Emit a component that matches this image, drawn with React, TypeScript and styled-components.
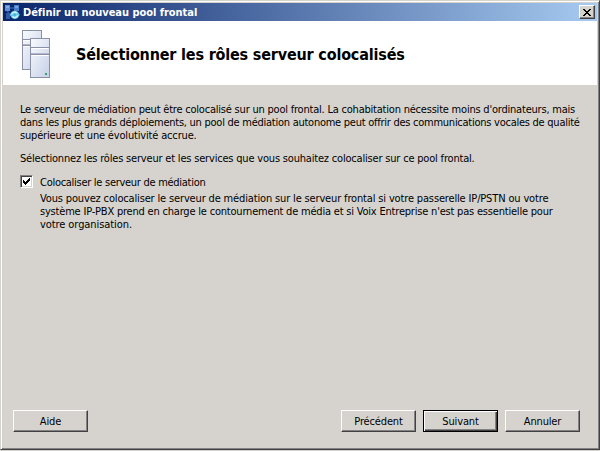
import React from "react";
import styled, { createGlobalStyle } from "styled-components";

const GlobalStyle = createGlobalStyle`
  *, *::before, *::after { box-sizing: border-box; }
  body {
    margin: 0;
    background: #d6d3ce;
    color: #000;
    font: 11px/13px "DejaVu Sans Condensed", Tahoma, "Noto Sans", sans-serif;
  }
  p { margin: 0; }
`;

const Dialog = styled.main`
  display: flex;
  flex-direction: column;
  width: 600px;
  height: 450px;
  padding: 2px 1px 1px;
  background: #d6d3ce;
  border: 1px solid;
  border-color: #d6d3ce #424142 #424142 #d6d3ce;
  box-shadow: inset 1px 1px 0 #fff, inset -1px -1px 0 #848284;
  overflow: hidden;
`;

const TitleBar = styled.header`
  display: flex;
  align-items: center;
  height: 18px;
  margin: 0 1px;
  padding: 0 2px 0 1px;
  flex: none;
  background: linear-gradient(90deg, #0a246a, #a6caf0);
`;

const TitleText = styled.h1`
  flex: 1;
  margin: 0 0 0 3px;
  padding-top: 2px;
  color: #fff;
  font-size: 11px;
  font-weight: 700;
  line-height: 14px;
  letter-spacing: -0.04px;
  white-space: nowrap;
`;

const CloseButton = styled.button`
  display: flex;
  align-items: center;
  justify-content: center;
  width: 16px;
  height: 14px;
  padding: 0;
  background: #d6d3ce;
  border: 1px solid;
  border-color: #fff #424142 #424142 #fff;
  box-shadow: inset -1px -1px 0 #848284;
`;

const Banner = styled.section`
  display: flex;
  height: 64px;
  margin: 0 1px;
  padding: 9px 0 0 18px;
  gap: 24px;
  flex: none;
  background: #fff;
`;

const Heading = styled.h2`
  margin: 15px 0 0;
  font-size: 16px;
  font-weight: 700;
  line-height: 20px;
  letter-spacing: -0.18px;
  white-space: nowrap;
`;

const Content = styled.section`
  flex: 1;
  padding: 18px 0 0 18px;
`;

const Paragraph = styled.p`
  margin-bottom: 10px;
`;

const Line = styled.span<{ $tracking: number }>`
  display: block;
  letter-spacing: ${(p) => p.$tracking}px;
  white-space: nowrap;
`;

const Option = styled.label`
  display: flex;
  align-items: flex-start;
  gap: 7px;
  height: 14px;

  & > ${Line} {
    padding-top: 1px;
  }
`;

const CheckBox = styled.span`
  display: flex;
  align-items: center;
  justify-content: center;
  width: 13px;
  height: 13px;
  background: #fff;
  border: 1px solid;
  border-color: #848284 #fff #fff #848284;
  box-shadow: inset 1px 1px 0 #424142, inset -1px -1px 0 #d6d3ce;
`;

const Description = styled.p`
  padding: 3px 0 0 20px;
`;

const Footer = styled.footer`
  display: flex;
  align-items: flex-start;
  height: 38px;
  padding: 0 18px 0 11px;
  flex: none;
`;

const Button = styled.button<{ $primary?: boolean }>`
  width: 75px;
  height: 22px;
  margin-left: 7px;
  padding: 0;
  font: inherit;
  letter-spacing: -0.15px;
  color: #000;
  background: #d6d3ce;
  border: 1px solid;
  border-color: ${(p) => (p.$primary ? "#000" : "#fff #424142 #424142 #fff")};
  box-shadow: ${(p) =>
    p.$primary
      ? "inset 1px 1px 0 #fff, inset -1px -1px 0 #424142, inset -2px -2px 0 #848284"
      : "inset -1px -1px 0 #848284"};

  &:first-child {
    margin: 0 auto 0 0;
  }
`;

const AppIcon = () => (
  <svg width="16" height="16" viewBox="0 0 16 16">
    <path d="M4 4h8M3 6l3 6M12 5l-4 5" stroke="#3979c6" strokeWidth="1" />
    <rect x="1" y="1" width="5" height="6" fill="#5a8ed6" />
    <rect x="10" y="1" width="5" height="6" fill="#4a7cc8" />
    <rect x="2" y="9" width="4" height="6" fill="#2f5aa5" />
    <path d="M2 3h3M11 3h3" stroke="#a4c8f0" />
    <path d="M5.6 10.8L8 7.4l2.8-1 3 1.4 2 3-2 3.2-3 1.2-3-1.2z" fill="#65c7e8" />
    <path d="M7.6 10.4c.7-2.4 3.6-3 5.3-1.2M13.8 11.2c-.7 2.4-3.6 3-5.3 1.2" fill="none" stroke="#c9f4ff" strokeWidth="1.5" />
    <path d="M9.3 10.8l1.5-1.2 1.5 1.2-1.5 1.2z" fill="#48a9d4" />
  </svg>
);

const ServersIcon = () => (
  <svg width="31" height="50" viewBox="0 0 31 50">
    <defs>
      <linearGradient id="face" x1="0" y1="0" x2="1" y2="1">
        <stop offset="0" stopColor="#f9fbff" />
        <stop offset="1" stopColor="#c5cfe6" />
      </linearGradient>
    </defs>
    <g stroke="#8a91a6" fill="url(#face)">
      <rect x="1.5" y=".5" width="19" height="39" />
      <path d="M1.5 9.5h19M1.5 15.5h19" />
      <rect x="9.5" y="8.5" width="19" height="39" />
      <path d="M9.5 17.5h19M9.5 24.5h19" />
    </g>
    <path d="M2.5 10.5h6M2.5 16.5h6M10.5 18.5h17M10.5 25.5h17" stroke="#fff" />
    <path d="M2 14.5h7M10 23.5h18" stroke="#b8b5cd" />
    <rect x="24" y="43" width="2" height="2" fill="#31a36b" />
  </svg>
);

const CloseIcon = () => (
  <svg width="8" height="7" viewBox="0 0 8 7" shapeRendering="crispEdges">
    <path d="M0 0h2v1h1v1h2v-1h1v-1h2v1h-1v1h-1v1h-1v1h1v1h1v1h1v1h-2v-1h-1v-1h-2v1h-1v1h-2v-1h1v-1h1v-1h1v-1h-1v-1h-1v-1h-1z" />
  </svg>
);

const CheckIcon = () => (
  <svg width="7" height="7" viewBox="0 0 7 7" shapeRendering="crispEdges">
    <path d="M0 2h1v1h1v1h1v-1h1v-1h1v-1h1v-1h1v3h-1v1h-1v1h-1v1h-1v1h-1v-1h-1v-1h-1z" />
  </svg>
);

export default function App() {
  return (
    <>
      <GlobalStyle />
      <Dialog>
        <TitleBar>
          <AppIcon />
          <TitleText>Définir un nouveau pool frontal</TitleText>
          <CloseButton aria-label="Fermer"><CloseIcon /></CloseButton>
        </TitleBar>
        <Banner>
          <ServersIcon />
          <Heading>Sélectionner les rôles serveur colocalisés</Heading>
        </Banner>
        <Content>
          <Paragraph>
            <Line $tracking={-0.211}>Le serveur de médiation peut être colocalisé sur un pool frontal. La cohabitation nécessite moins d'ordinateurs, mais</Line>
            <Line $tracking={-0.256}>dans les plus grands déploiements, un pool de médiation autonome peut offrir des communications vocales de qualité</Line>
            <Line $tracking={-0.17}>supérieure et une évolutivité accrue.</Line>
          </Paragraph>
          <Paragraph>
            <Line $tracking={-0.19}>Sélectionnez les rôles serveur et les services que vous souhaitez colocaliser sur ce pool frontal.</Line>
          </Paragraph>
          <Option>
            <CheckBox role="checkbox" aria-checked="true"><CheckIcon /></CheckBox>
            <Line $tracking={-0.28}>Colocaliser le serveur de médiation</Line>
          </Option>
          <Description>
            <Line $tracking={-0.153}>Vous pouvez colocaliser le serveur de médiation sur le serveur frontal si votre passerelle IP/PSTN ou votre</Line>
            <Line $tracking={-0.2}>système IP-PBX prend en charge le contournement de média et si Voix Entreprise n'est pas essentielle pour</Line>
            <Line $tracking={-0.08}>votre organisation.</Line>
          </Description>
        </Content>
        <Footer>
          <Button>Aide</Button>
          <Button>Précédent</Button>
          <Button $primary>Suivant</Button>
          <Button>Annuler</Button>
        </Footer>
      </Dialog>
    </>
  );
}
